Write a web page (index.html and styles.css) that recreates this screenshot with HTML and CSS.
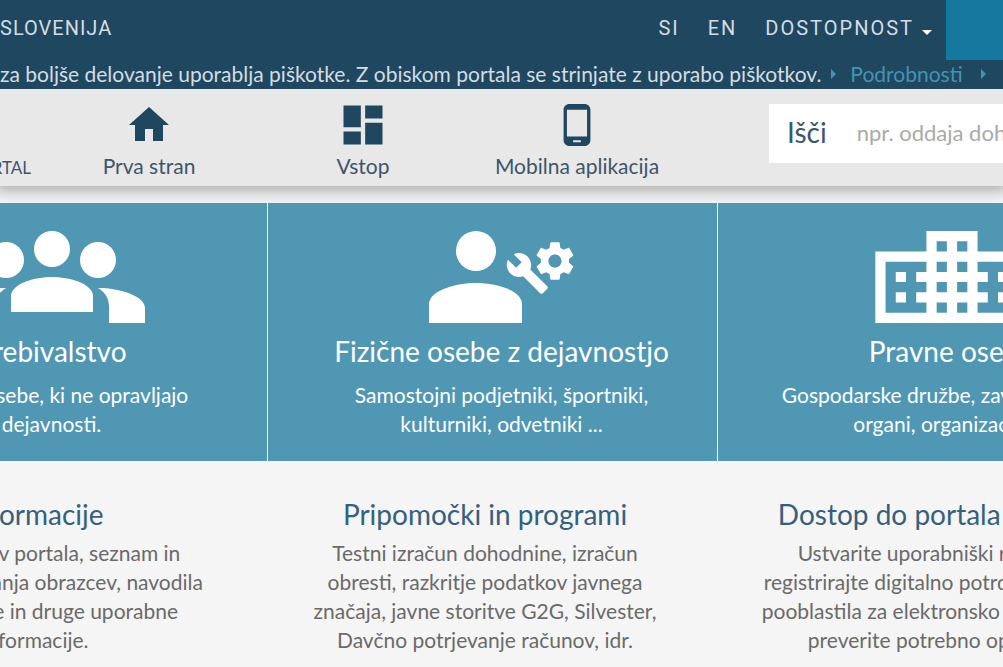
FILE: index.html
```html
<!DOCTYPE html>
<html lang="sl">
<head>
    <meta charset="UTF-8">
    <meta name="viewport" content="width=device-width, initial-scale=1.0">
    <title>eDavki</title>
    <link rel="stylesheet" href="styles.css">
</head>
<body>
    <header class="top">
        <div class="topbar">
            <span class="country">SLOVENIJA</span>
            <nav class="lang">
                <a href="#">SI</a>
                <a href="#">EN</a>
                <button class="access">DOSTOPNOST <i class="caret"></i></button>
            </nav>
            <div class="accent"></div>
        </div>
        <div class="cookies">
            <span>za boljše delovanje uporablja piškotke. Z obiskom portala se strinjate z uporabo piškotkov.</span>
            <a href="#" class="more">Podrobnosti</a>
            <a href="#" class="more" aria-label="Zapri"></a>
        </div>
    </header>

    <div class="menu">
        <div class="brand">PORTAL</div>
        <nav class="links">
            <a href="#">
                <span class="ico"><svg width="48" height="48" viewBox="0 0 24 24"><path d="M10 20v-6h4v6h5v-8h3L12 3 2 12h3v8z"/></svg></span>
                Prva stran
            </a>
            <a href="#">
                <span class="ico"><svg width="52" height="52" viewBox="0 0 24 24"><path d="M3 13h8V3H3v10zm0 8h8v-6H3v6zm10 0h8V11h-8v10zm0-18v6h8V3h-8z"/></svg></span>
                Vstop
            </a>
            <a href="#">
                <span class="ico"><svg width="46" height="46" viewBox="0 0 24 24"><path d="M16 1H8C6.34 1 5 2.34 5 4v16c0 1.66 1.34 3 3 3h8c1.66 0 3-1.34 3-3V4c0-1.66-1.34-3-3-3zm-2 20h-4v-1h4v1zm3.25-3H6.75V4h10.5v14z"/></svg></span>
                Mobilna aplikacija
            </a>
        </nav>
        <form class="search">
            <label for="q">Išči</label>
            <input type="text" id="q" placeholder="npr. oddaja dohodnine">
        </form>
    </div>

    <main>
        <div class="tiles">
            <a href="#" class="tile">
                <svg width="186" height="92" viewBox="0 0 186 92">
                    <circle cx="47" cy="29" r="18"/>
                    <circle cx="93" cy="18" r="18"/>
                    <circle cx="139" cy="29" r="18"/>
                    <path d="M52 81V64C54 52 76 46 93 46s39 6 41 18v17z"/>
                    <path d="M139 57c22 0 47 8 47 20v15h-36V76c0-9-4-15-11-19z"/>
                    <path d="M47 57C25 57 0 65 0 77v15h36V76c0-9 4-15 11-19z"/>
                </svg>
                <h2>Prebivalstvo</h2>
                <p>Fizične osebe, ki ne opravljajo<br>dejavnosti.</p>
            </a>
            <a href="#" class="tile">
                <svg width="146" height="92" viewBox="0 0 146 92">
                    <circle cx="47" cy="20" r="20"/>
                    <path d="M0 92V72C2 59 27 52 47 52s44 7 46 20v20z"/>
                    <path transform="translate(76 20) scale(1.86)" d="M22.7 19l-9.1-9.1c.9-2.3.4-5-1.5-6.9-2-2-5-2.4-7.4-1.3L9 6 6 9 1.6 4.7C.4 7.1.9 10.1 2.9 12.1c1.9 1.9 4.6 2.4 6.9 1.5l9.1 9.1c.4.4 1 .4 1.4 0l2.3-2.3c.5-.4.5-1.1.1-1.4z"/>
                    <path transform="translate(103.4 7.4) scale(1.88)" d="M19.43 12.98c.04-.32.07-.64.07-.98s-.03-.66-.07-.98l2.11-1.65c.19-.15.24-.42.12-.64l-2-3.46c-.12-.22-.39-.3-.61-.22l-2.49 1c-.52-.4-1.08-.73-1.69-.98l-.38-2.65C14.46 2.18 14.25 2 14 2h-4c-.25 0-.46.18-.49.42l-.38 2.65c-.61.25-1.17.59-1.69.98l-2.49-1c-.23-.09-.49 0-.61.22l-2 3.46c-.13.22-.07.49.12.64l2.11 1.65c-.04.32-.07.65-.07.98s.03.66.07.98l-2.11 1.65c-.19.15-.24.42-.12.64l2 3.46c.12.22.39.3.61.22l2.49-1c.52.4 1.08.73 1.69.98l.38 2.65c.03.24.24.42.49.42h4c.25 0 .46-.18.49-.42l.38-2.65c.61-.25 1.17-.59 1.69-.98l2.49 1c.23.09.49 0 .61-.22l2-3.46c.12-.22.07-.49-.12-.64l-2.11-1.65zM12 15.5c-1.93 0-3.5-1.57-3.5-3.5s1.57-3.5 3.5-3.5 3.5 1.57 3.5 3.5-1.57 3.5-3.5 3.5z"/>
                </svg>
                <h2>Fizične osebe z dejavnostjo</h2>
                <p>Samostojni podjetniki, športniki,<br>kulturniki, odvetniki ...</p>
            </a>
            <a href="#" class="tile">
                <svg width="154" height="92" viewBox="0 0 15 9">
                    <path fill-rule="evenodd" d="M0 2h5V0h5v2h5v7H0zM1 3v5h4V7H4V6h1V5H4V4h1V3zM2 4h1v1H2zM2 6h1v1H2zM10 3v1h1v1h-1v1h1v1h-1v1h4V3zM12 4h1v1h-1zM12 6h1v1h-1zM6 1h1v1H6zM8 1h1v1H8zM6 3h1v1H6zM8 3h1v1H8zM6 5h1v1H6zM8 5h1v1H8zM6 7h1v1H6zM8 7h1v1H8z"/>
                </svg>
                <h2>Pravne osebe</h2>
                <p>Gospodarske družbe, zavodi, državni,<br>organi, organizacije ...</p>
            </a>
        </div>

        <div class="infos">
            <section class="info">
                <h2><a href="#">Informacije</a></h2>
                <p>Opis menijev portala, seznam in<br>opis izpolnjevanja obrazcev, navodila<br>vse uporabe in druge uporabne<br>informacije.</p>
            </section>
            <section class="info">
                <h2><a href="#">Pripomočki in programi</a></h2>
                <p>Testni izračun dohodnine, izračun<br>obresti, razkritje podatkov javnega<br>značaja, javne storitve G2G, Silvester,<br>Davčno potrjevanje računov, idr.</p>
            </section>
            <section class="info">
                <h2><a href="#">Dostop do portala eDavki</a></h2>
                <p>Ustvarite uporabniški račun in<br>registrirajte digitalno potrdilo, uredite<br>pooblastila za elektronsko poslovanje,<br>preverite potrebno opremo.</p>
            </section>
        </div>
    </main>
</body>
</html>
```
FILE: styles.css
```css
*{
    box-sizing: border-box;
}
body{
    margin: 0;
    background-color: #f5f5f5;
    font-family: Lato, "Open Sans", sans-serif;
    font-size: 21px;
    line-height: 29px;
    color: #6a6a6a;
    overflow-x: hidden;
}
a{
    color: inherit;
    text-decoration: none;
}
h2, p{
    margin: 0;
    font-weight: normal;
}
.top{
    position: relative;
    z-index: 2;
    background-color: #1f475f;
    color: #d3dde3;
}
.topbar{
    display: flex;
    height: 59px;
    line-height: 56px;
    font-family: Roboto, sans-serif;
    font-size: 20px;
    letter-spacing: 2px;
}
.country{
    letter-spacing: 1px;
}
.lang{
    display: flex;
    align-items: flex-start;
    gap: 28px;
    margin-left: auto;
    margin-right: 14px;
}
.access{
    display: flex;
    align-items: center;
    gap: 8px;
    height: 56px;
    padding: 0;
    border: 0;
    background: none;
    color: inherit;
    font: inherit;
    letter-spacing: inherit;
}
.caret{
    margin-top: 8px;
    border: 5px solid transparent;
    border-top-color: #fff;
    border-bottom: 0;
}
.accent{
    width: 57px;
    height: 60px;
    background-color: #14789f;
}
.cookies{
    display: flex;
    align-items: flex-start;
    height: 30px;
    white-space: nowrap;
}
.more{
    display: flex;
    align-items: center;
    gap: 14px;
    height: 29px;
    margin-left: 10px;
    color: #4593b3;
}
.more + .more{
    margin-left: 18px;
}
.more::before{
    content: "";
    border: 5px solid transparent;
    border-left-color: #4593b3;
    border-right: 0;
}
.menu{
    display: flex;
    position: relative;
    height: 97px;
    background-color: #e8e8e8;
    color: #3c566b;
    box-shadow: 0 0 14px 5px rgba(0,0,0,.3);
}
.brand{
    display: flex;
    justify-content: flex-end;
    width: 42px;
    padding: 64px 11px 0 0;
    font-size: 17px;
}
.links{
    display: flex;
}
.links a{
    display: flex;
    flex-direction: column;
    align-items: center;
    width: 214px;
    padding-top: 10px;
}
.ico{
    display: flex;
    align-items: center;
    height: 52px;
    fill: #1f475f;
}
.search{
    display: flex;
    flex: 1;
    align-items: center;
    height: 59px;
    margin: 15px 0 0 85px;
    padding: 0 0 3px 18px;
    background-color: #fff;
    overflow: hidden;
}
.search label{
    font-size: 28px;
}
.search input{
    flex: 1;
    min-width: 0;
    margin-left: 30px;
    padding: 0;
    border: 0;
    font: inherit;
    font-size: 22px;
}
.search input::placeholder{
    color: #aaa;
}
.tiles, .infos{
    display: flex;
    justify-content: center;
    overflow: hidden;
    text-align: center;
    white-space: nowrap;
}
.tiles{
    position: relative;
    margin-top: 17px;
    padding-right: 19px;
}
.tile{
    flex: 0 0 450px;
    padding: 28px 0 23px 18px;
    border-left: 1px solid #fff;
    background-color: #5097b4;
    color: #fff;
}
.tile svg{
    display: block;
    margin: 0 auto;
    fill: #fff;
}
.tile h2{
    margin: 11px 0 12px;
    font-size: 28px;
    line-height: 34px;
}
.infos{
    padding: 35px 33px 0 0;
}
.info{
    flex: 0 0 450px;
}
.info h2{
    margin-bottom: 6px;
    font-size: 28px;
    line-height: 36px;
    color: #35607e;
}
```
